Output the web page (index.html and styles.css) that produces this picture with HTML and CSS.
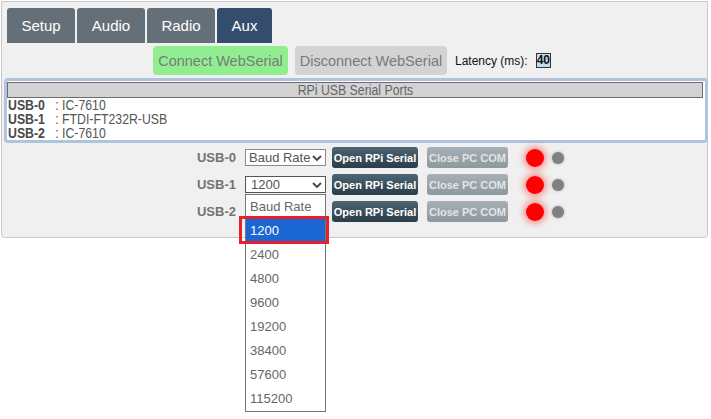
FILE: index.html
```html
<!DOCTYPE html>
<html lang="en">
<head>
    <meta charset="UTF-8">
    <meta name="viewport" content="width=device-width, initial-scale=1.0">
    <title>Aux</title>
    <link rel="stylesheet" href="styles.css">
</head>
<body>
    <div class="panel">
        <div class="tabs">
            <div class="tab">Setup</div>
            <div class="tab">Audio</div>
            <div class="tab">Radio</div>
            <div class="tab active">Aux</div>
        </div>

        <div class="toolbar">
            <button class="btn-connect">Connect WebSerial</button>
            <button class="btn-disconnect">Disconnect WebSerial</button>
            <span class="latency">Latency (ms):</span>
            <span class="latency-box">40</span>
        </div>

        <div class="ports">
            <div class="ports-head"><span>RPi USB Serial Ports</span></div>
            <div class="port-line"><span><b>USB-0</b>&nbsp;&nbsp; : IC-7610</span></div>
            <div class="port-line"><span><b>USB-1</b>&nbsp;&nbsp; : FTDI-FT232R-USB</span></div>
            <div class="port-line"><span><b>USB-2</b>&nbsp;&nbsp; : IC-7610</span></div>
        </div>

        <div class="rows">
            <div class="row">
                <span class="row-label">USB-0</span>
                <div class="select">
                    <span>Baud Rate</span>
                    <svg class="chev" width="10" height="8" viewBox="0 0 10 8"><path d="M1 2 L5 6 L9 2" fill="none" stroke="#444" stroke-width="1.8"/></svg>
                </div>
                <button class="btn-open">Open RPi Serial</button>
                <button class="btn-close">Close PC COM</button>
                <span class="led-red"></span>
                <span class="led-gray"></span>
            </div>
            <div class="row">
                <span class="row-label">USB-1</span>
                <div class="select focused">
                    <span>1200</span>
                    <svg class="chev" width="10" height="8" viewBox="0 0 10 8"><path d="M1 2 L5 6 L9 2" fill="none" stroke="#444" stroke-width="1.8"/></svg>
                    <ul class="dropdown">
                        <li>Baud Rate</li>
                        <li class="picked">1200</li>
                        <li>2400</li>
                        <li>4800</li>
                        <li>9600</li>
                        <li>19200</li>
                        <li>38400</li>
                        <li>57600</li>
                        <li>115200</li>
                    </ul>
                    <div class="mark"></div>
                </div>
                <button class="btn-open">Open RPi Serial</button>
                <button class="btn-close">Close PC COM</button>
                <span class="led-red"></span>
                <span class="led-gray"></span>
            </div>
            <div class="row">
                <span class="row-label">USB-2</span>
                <div class="select">
                    <span>Baud Rate</span>
                    <svg class="chev" width="10" height="8" viewBox="0 0 10 8"><path d="M1 2 L5 6 L9 2" fill="none" stroke="#444" stroke-width="1.8"/></svg>
                </div>
                <button class="btn-open">Open RPi Serial</button>
                <button class="btn-close">Close PC COM</button>
                <span class="led-red"></span>
                <span class="led-gray"></span>
            </div>
        </div>
    </div>
</body>
</html>
```

FILE: styles.css
```css
html, body {
    min-height: 419px;
}

body {
    font-family: "Liberation Sans", Arial, sans-serif;
    background-color: #fff;
    margin: 0;
    padding: 0;
}

.panel {
    position: relative;
    margin: 1px;
    width: 707px;
    height: 237px;
    box-sizing: border-box;
    border: 1px solid #c8c8c8;
    border-radius: 0 0 4px 4px;
    background-color: #f0f0f0;
}

.tabs {
    display: flex;
    gap: 2px;
    padding: 6px 0 0 5px;
}

.tab {
    width: 68px;
    height: 35px;
    line-height: 35px;
    text-align: center;
    font-size: 15px;
    color: #fff;
    background-color: #656f77;
    border-radius: 3px 3px 0 0;
}

.tab.active {
    width: 55px;
    background-color: #344d6e;
}

.toolbar {
    display: flex;
    align-items: center;
    margin-top: 3px;
    padding-left: 151px;
    height: 29px;
}

.toolbar button {
    font-family: inherit;
    font-size: 14.5px;
    color: #7a7a7a;
    height: 29px;
    border: none;
    border-radius: 4px;
    padding: 0;
}

.btn-connect {
    width: 135px;
    background-color: #90ee90;
}

.btn-disconnect {
    width: 152px;
    margin-left: 7px;
    background-color: #d3d3d3;
}

.latency {
    margin-left: 8px;
    font-size: 12px;
    color: #111;
}

.latency-box {
    margin-left: 8px;
    width: 13px;
    height: 13px;
    line-height: 13px;
    font-size: 12px;
    font-weight: bold;
    text-align: center;
    background-color: #c5dcef;
    border: 1px solid #333;
    color: #111;
}

.ports {
    margin: 3px 0 0 2px;
    width: 704px;
    box-sizing: border-box;
    border: 3px solid #b0c4de;
    border-radius: 4px;
    background-color: #fff;
    padding: 1px 2px 0 0;
    font-size: 15px;
    color: #555;
}

.ports span {
    display: inline-block;
    transform: scaleX(0.82);
    transform-origin: left center;
    white-space: nowrap;
}

.ports-head {
    height: 14px;
    line-height: 14px;
    border: 1px solid #6c6c6c;
    background-color: #d3d3d3;
    text-align: center;
    color: #666;
}

.ports-head span {
    transform-origin: center center;
}

.port-line {
    line-height: 14px;
    padding-left: 1px;
}

.port-line b {
    color: #4a4a4a;
}

.rows {
    margin-top: 4px;
    display: flex;
    flex-direction: column;
    gap: 6px;
}

.row {
    display: flex;
    align-items: center;
    height: 21px;
    padding-left: 184px;
}

.row-label {
    width: 50px;
    text-align: right;
    font-size: 13px;
    font-weight: bold;
    color: #737373;
}

.select {
    position: relative;
    margin-left: 9px;
    width: 81px;
    height: 17px;
    box-sizing: border-box;
    border: 1px solid #8a8a8a;
    background-color: #fff;
    font-size: 13px;
    line-height: 15px;
    color: #555;
    padding-left: 3px;
}

.select.focused {
    border-color: #555;
    padding-left: 5px;
}

.chev {
    position: absolute;
    right: 3px;
    top: 4px;
}

.dropdown {
    position: absolute;
    left: -1px;
    top: 17px;
    width: 81px;
    margin: 0;
    padding: 0;
    list-style: none;
    box-sizing: border-box;
    border: 1px solid #777;
    background-color: #fff;
    z-index: 2;
}

.dropdown li {
    height: 24px;
    line-height: 24px;
    padding-left: 4px;
    font-size: 13px;
    color: #666;
}

.dropdown li.picked {
    background-color: #1a66d3;
    color: #fff;
}

.mark {
    position: absolute;
    left: -7px;
    top: 39px;
    width: 90px;
    height: 28px;
    box-sizing: border-box;
    border: 3px solid #e5222c;
    z-index: 3;
}

.btn-open, .btn-close {
    font-family: inherit;
    font-size: 11px;
    font-weight: bold;
    height: 21px;
    border: none;
    border-radius: 3px;
    padding: 0;
}

.btn-open {
    margin-left: 6px;
    width: 86px;
    color: #fff;
    background: linear-gradient(#4d6573, #2a3c47);
}

.btn-close {
    margin-left: 9px;
    width: 81px;
    color: #e4e4e4;
    background: linear-gradient(#a6b0b6, #8d989f);
}

.led-red {
    margin-left: 18px;
    width: 18px;
    height: 18px;
    border-radius: 50%;
    background-color: #ff0000;
    box-shadow: 0 0 7px 2px rgba(255, 0, 0, 0.45);
}

.led-gray {
    margin-left: 8px;
    width: 12px;
    height: 12px;
    border-radius: 50%;
    background-color: #808080;
    box-shadow: 0 0 3px rgba(0, 0, 0, 0.3);
}
```
